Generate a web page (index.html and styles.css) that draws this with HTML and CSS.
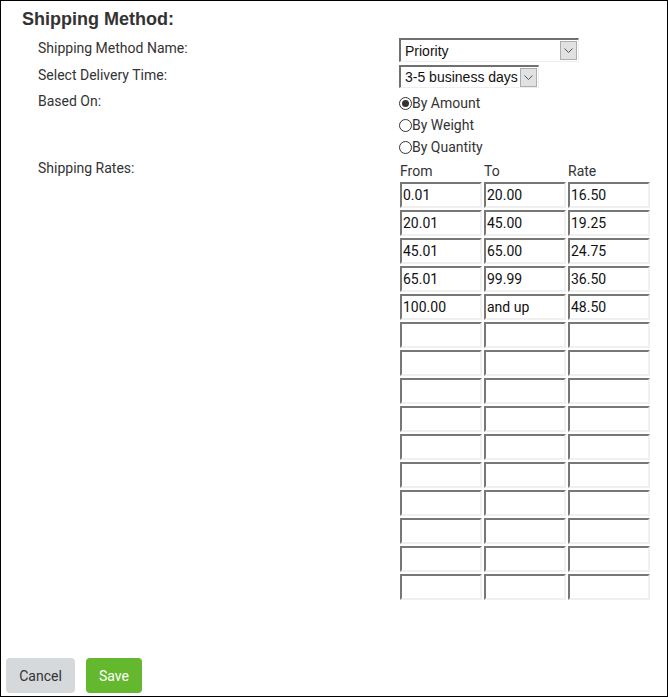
FILE: index.html
```html
<!DOCTYPE html>
<html>
<head>
<meta charset="utf-8">
<link rel="stylesheet" href="styles.css">
</head>
<body>
<div class="panel">
  <h1 class="title">Shipping Method:</h1>
  <div class="form">
    <div class="label">Shipping Method Name:</div>
    <div class="field">
      <div class="select select-wide"><span class="select-text">Priority</span><span class="select-btn"><svg width="9" height="5" viewBox="0 0 9 5"><path d="M0.5 0.5 L4.5 4.5 L8.5 0.5" fill="none" stroke="#555" stroke-width="1"/></svg></span></div>
    </div>
    <div class="label">Select Delivery Time:</div>
    <div class="field">
      <div class="select select-narrow"><span class="select-text">3-5 business days</span><span class="select-btn"><svg width="9" height="5" viewBox="0 0 9 5"><path d="M0.5 0.5 L4.5 4.5 L8.5 0.5" fill="none" stroke="#555" stroke-width="1"/></svg></span></div>
    </div>
    <div class="label">Based On:</div>
    <div class="field radios">
      <div class="radio-row"><span class="radio checked"></span>By Amount</div>
      <div class="radio-row"><span class="radio"></span>By Weight</div>
      <div class="radio-row"><span class="radio"></span>By Quantity</div>
    </div>
    <div class="label label-rates">Shipping Rates:</div>
    <div class="field rates">
      <div class="rate-head"><span>From</span><span>To</span><span>Rate</span></div>
      <div class="rate-grid">
        <div class="inp">0.01</div><div class="inp">20.00</div><div class="inp">16.50</div>
        <div class="inp">20.01</div><div class="inp">45.00</div><div class="inp">19.25</div>
        <div class="inp">45.01</div><div class="inp">65.00</div><div class="inp">24.75</div>
        <div class="inp">65.01</div><div class="inp">99.99</div><div class="inp">36.50</div>
        <div class="inp">100.00</div><div class="inp">and up</div><div class="inp">48.50</div>
        <div class="inp"></div><div class="inp"></div><div class="inp"></div>
        <div class="inp"></div><div class="inp"></div><div class="inp"></div>
        <div class="inp"></div><div class="inp"></div><div class="inp"></div>
        <div class="inp"></div><div class="inp"></div><div class="inp"></div>
        <div class="inp"></div><div class="inp"></div><div class="inp"></div>
        <div class="inp"></div><div class="inp"></div><div class="inp"></div>
        <div class="inp"></div><div class="inp"></div><div class="inp"></div>
        <div class="inp"></div><div class="inp"></div><div class="inp"></div>
        <div class="inp"></div><div class="inp"></div><div class="inp"></div>
        <div class="inp"></div><div class="inp"></div><div class="inp"></div>
      </div>
    </div>
  </div>
  <div class="footer">
    <button class="btn btn-cancel">Cancel</button>
    <button class="btn btn-save">Save</button>
  </div>
</div>
</body>
</html>
```
FILE: styles.css
```css
* { box-sizing: border-box; }
html, body { margin: 0; padding: 0; background: #fff; }
body { font-family: Roboto, "Liberation Sans", sans-serif; color: #333; }

.panel {
  width: 668px;
  height: 697px;
  border: 1px solid #000;
  display: flex;
  flex-direction: column;
}

.title {
  margin: 7px 0 0 21px;
  font-family: "Liberation Sans", Arial, sans-serif;
  font-weight: bold;
  font-size: 18px;
  line-height: 22px;
  color: #333;
}

.form {
  display: grid;
  grid-template-columns: 361px 1fr;
  row-gap: 3px;
  padding-left: 37px;
  margin-top: 8px;
}

.label {
  font-size: 14px;
  line-height: 20px;
  color: #333;
}

.field { display: flex; flex-direction: column; }

.select {
  display: flex;
  align-items: center;
  height: 24px;
  border-top: 2px solid #707070;
  border-left: 2px solid #707070;
  border-right: 1px solid #eee;
  border-bottom: 1px solid #eee;
  font-family: "Liberation Sans", Arial, sans-serif;
  font-size: 14px;
  color: #111;
  background: #fff;
}
.select-wide { width: 180px; }
.select-narrow { width: 140px; height: 23px; }
.select-text { flex: 1; padding-left: 4px; white-space: nowrap; }
.select-btn {
  width: 17px;
  height: 19px;
  margin-right: 1px;
  background: #e1e1e1;
  border: 1px solid #adadad;
  display: flex;
  align-items: center;
  justify-content: center;
}

.radios { padding-top: 1px; }
.radio-row {
  display: flex;
  align-items: center;
  height: 22px;
  font-size: 14px;
  color: #333;
}
.radio {
  width: 13px;
  height: 13px;
  border: 1px solid #333;
  border-radius: 50%;
  display: inline-flex;
  align-items: center;
  justify-content: center;
}
.radio.checked::after {
  content: "";
  width: 7px;
  height: 7px;
  border-radius: 50%;
  background: #333;
}

.label-rates { line-height: 14px; }

.rates { padding-left: 1px; }
.rate-head {
  display: grid;
  grid-template-columns: 82px 82px 82px;
  column-gap: 2px;
  height: 19px;
  margin-bottom: 2px;
  align-items: center;
  font-size: 14px;
  color: #333;
}
.rate-grid {
  display: grid;
  grid-template-columns: 82px 82px 82px;
  gap: 2px;
}
.inp {
  height: 26px;
  border-top: 2px solid #777;
  border-left: 2px solid #777;
  border-right: 2px solid #f0f0f0;
  border-bottom: 2px solid #f0f0f0;
  padding-left: 1px;
  font-size: 14px;
  line-height: 22px;
  color: #111;
}

.footer {
  margin-top: auto;
  display: flex;
  gap: 11px;
  padding: 0 0 3px 5px;
}
.btn {
  height: 35px;
  border: none;
  border-radius: 4px;
  font-family: Roboto, "Liberation Sans", sans-serif;
  font-size: 14px;
  padding: 0;
}
.btn-cancel { width: 69px; background: #d6d9db; color: #333; }
.btn-save { width: 56px; background: #63b82e; color: #fff; }
```
